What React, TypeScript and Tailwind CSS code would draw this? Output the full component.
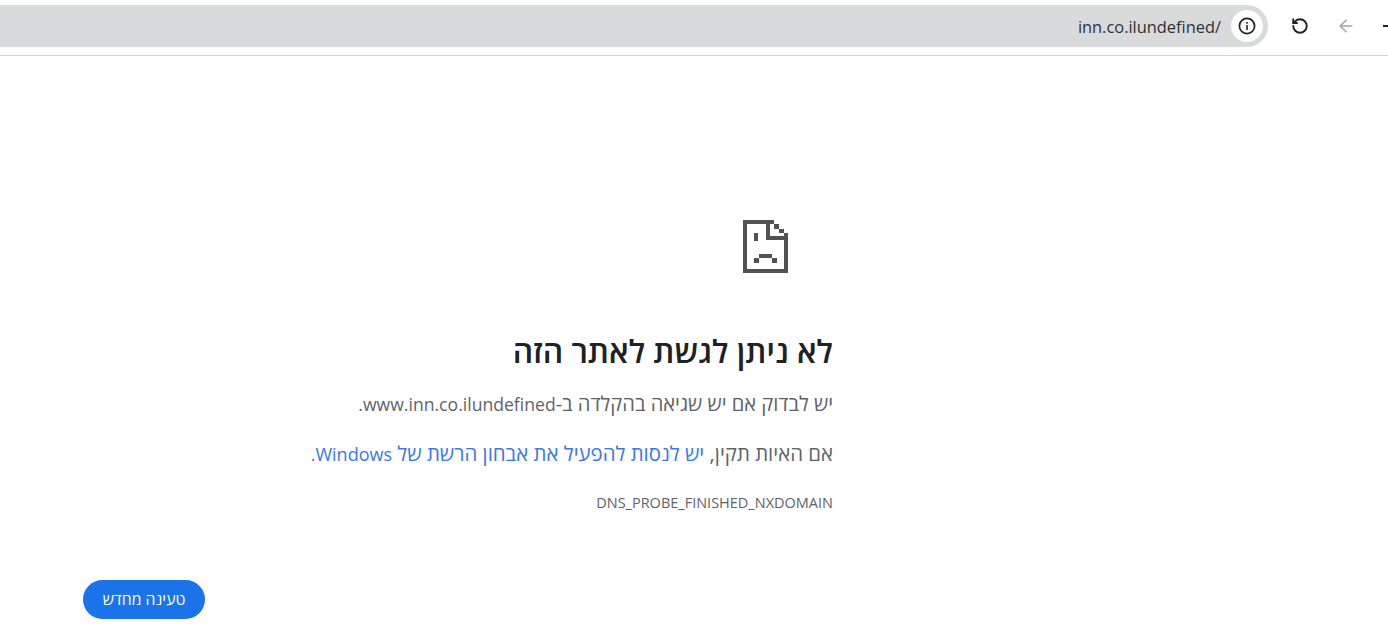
import React from 'react';
import { RotateCcw, ArrowLeft } from 'lucide-react';

const SadFile = () => (
  <svg width="45" height="53" viewBox="0 0 45 53" fill="#525252" shapeRendering="crispEdges">
    <rect x="0" y="0" width="4" height="53" />
    <rect x="0" y="0" width="31" height="4" />
    <rect x="0" y="49" width="45" height="4" />
    <rect x="41" y="13" width="4" height="40" />
    <rect x="23" y="0" width="4" height="20" />
    <rect x="23" y="16" width="22" height="4" />
    <rect x="31" y="4" width="5" height="5" />
    <rect x="36" y="9" width="5" height="4" />
    <rect x="11" y="13" width="4" height="8" />
    <rect x="16" y="34" width="13" height="4" />
    <rect x="11" y="38" width="5" height="5" />
    <rect x="29" y="38" width="5" height="5" />
  </svg>
);

const InfoIcon = () => (
  <svg width="18" height="18" viewBox="0 0 18 18" fill="none">
    <circle cx="9" cy="9" r="7.6" stroke="#202124" strokeWidth="1.7" />
    <rect x="8.2" y="8" width="1.6" height="5" fill="#202124" />
    <rect x="8.2" y="5" width="1.6" height="1.7" fill="#202124" />
  </svg>
);

export default function App() {
  return (
    <div className="h-[637px] w-[1388px] overflow-hidden bg-white font-['Open_Sans','Noto_Sans','DejaVu_Sans',sans-serif]">
      <header className="flex h-[56px] items-start border-b border-[#d4d4d6] pt-[5px]">
        <div className="flex h-[42px] w-[1268px] shrink-0 items-center justify-end rounded-r-full bg-[#d9dadc] pr-[5px]">
          <span className="mr-[10px] pt-[2px] text-[16.4px] text-[#303134]">inn.co.ilundefined/</span>
          <div className="flex h-[32px] w-[32px] items-center justify-center rounded-full bg-white">
            <InfoIcon />
          </div>
        </div>
        <div className="flex h-[42px] items-center">
          <RotateCcw size={18} strokeWidth={2.5} className="ml-[23px] text-[#202124]" />
          <ArrowLeft size={20} strokeWidth={1.8} className="ml-[27px] text-[#a2a3a6]" />
          <div className="ml-[27px] h-[2px] w-[5px] bg-[#202124]" />
        </div>
      </header>

      <main dir="rtl" className="ml-[83px] w-[750px] pt-[164px]">
        <div className="mr-[45px] h-[53px] w-[45px]">
          <SadFile />
        </div>
        <h1 className="mt-[55px] text-[31.8px] leading-[46px] font-semibold text-[#202124]">לא ניתן לגשת לאתר הזה</h1>
        <p className="mt-[16px] text-[20.1px] leading-[28px] text-[#5f6368]">
          יש לבדוק אם יש שגיאה בהקלדה ב-<span className="text-[17.6px]">www.inn.co.ilundefined.</span>
        </p>
        <p className="mt-[21px] text-[20.4px] leading-[28px] text-[#5f6368]">
          אם האיות תקין, <span className="text-[#3b78e7]">יש לנסות להפעיל את אבחון הרשת של <span className="text-[18px]">Windows.</span></span>
        </p>
        <div className="mt-[25px] text-[14.5px] leading-[20px] text-[#5f6368]">DNS_PROBE_FINISHED_NXDOMAIN</div>
        <div className="mt-[67px] flex justify-end">
          <button className="h-[39px] w-[122px] rounded-full bg-[#1a73e8] text-[15.8px] font-medium text-white">טעינה מחדש</button>
        </div>
      </main>
    </div>
  );
}
